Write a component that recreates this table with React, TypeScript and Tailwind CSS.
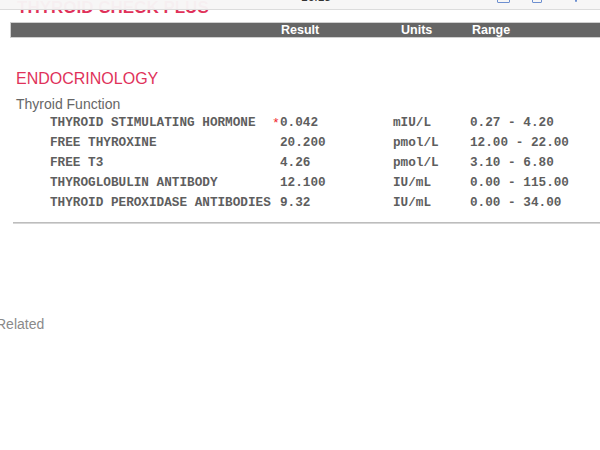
import React from "react";

const rows = [
  { name: "THYROID STIMULATING HORMONE", result: "0.042", flag: true, units: "mIU/L", range: "0.27 - 4.20" },
  { name: "FREE THYROXINE", result: "20.200", flag: false, units: "pmol/L", range: "12.00 - 22.00" },
  { name: "FREE T3", result: "4.26", flag: false, units: "pmol/L", range: "3.10 - 6.80" },
  { name: "THYROGLOBULIN ANTIBODY", result: "12.100", flag: false, units: "IU/mL", range: "0.00 - 115.00" },
  { name: "THYROID PEROXIDASE ANTIBODIES", result: "9.32", flag: false, units: "IU/mL", range: "0.00 - 34.00" },
];

export default function App() {
  return (
    <div
      className="relative w-[600px] h-[450px] bg-white overflow-hidden"
      style={{ fontFamily: '"Liberation Sans", Arial, sans-serif' }}
    >
      {/* translucent top toolbar (overlay) */}
      <div className="absolute left-0 top-0 w-[600px] h-[10px] bg-[#f7f6f6]/[0.97] border-b border-[#dcdcdc] z-10 overflow-hidden">
        <div className="absolute left-[301px] top-[-9px] text-[12px] leading-[12px] text-[#333]">16:15</div>
        <div className="absolute left-[497px] top-[-8px] w-[13px] h-[11px] border border-[#6d8fd0] rounded-[1px]" />
        <div className="absolute left-[532px] top-[-8px] w-[10px] h-[11px] border border-[#6d8fd0] rounded-[1px]" />
        <div className="absolute left-[575px] top-[-8px] w-[2px] h-[10px] bg-[#6d8fd0] rounded-[1px]" />
      </div>

      {/* clipped red report title */}
      <div className="mt-[-1px] pl-[17px] text-[17px] leading-[17px] font-bold text-[#e0325a] whitespace-nowrap">
        THYROID CHECK PLUS
      </div>

      {/* column header bar */}
      <div className="mt-[6px] ml-[10px] h-[16px] bg-[#666666] border border-[#cfcfcf] border-r-0 flex text-white font-bold text-[12.5px] leading-[14px]">
        <div className="w-[270px]" />
        <div className="w-[120px]">Result</div>
        <div className="w-[71px]">Units</div>
        <div>Range</div>
      </div>

      {/* section */}
      <div className="mt-[32px] pl-[16px] text-[16px] leading-[18px] text-[#e0325a]">ENDOCRINOLOGY</div>
      <div className="mt-[8px] pl-[16px] text-[14px] leading-[16px] text-[#666666]">Thyroid Function</div>

      <div
        className="mt-[1px] pl-[50px] text-[12.7px] leading-[20px] font-bold text-[#5e5e5e] whitespace-pre"
        style={{ fontFamily: '"Liberation Mono", "Courier New", monospace' }}
      >
        {rows.map((r) => (
          <div key={r.name} className="grid grid-cols-[230px_113px_77px_1fr]">
            <div>{r.name}</div>
            <div className="relative">
              {r.flag && (
                <span className="absolute left-[-8px] top-[1px] text-[#f0282d] text-[13px] font-normal">*</span>
              )}
              {r.result}
            </div>
            <div>{r.units}</div>
            <div>{r.range}</div>
          </div>
        ))}
      </div>

      <div className="mt-[9px] ml-[13px] h-[2px] bg-[#bdbdbd] border-b border-[#d6d6d6]" />

      <div className="mt-[92px] ml-[-4px] text-[14px] leading-[16px] text-[#8a8a8a]">Related</div>
    </div>
  );
}
